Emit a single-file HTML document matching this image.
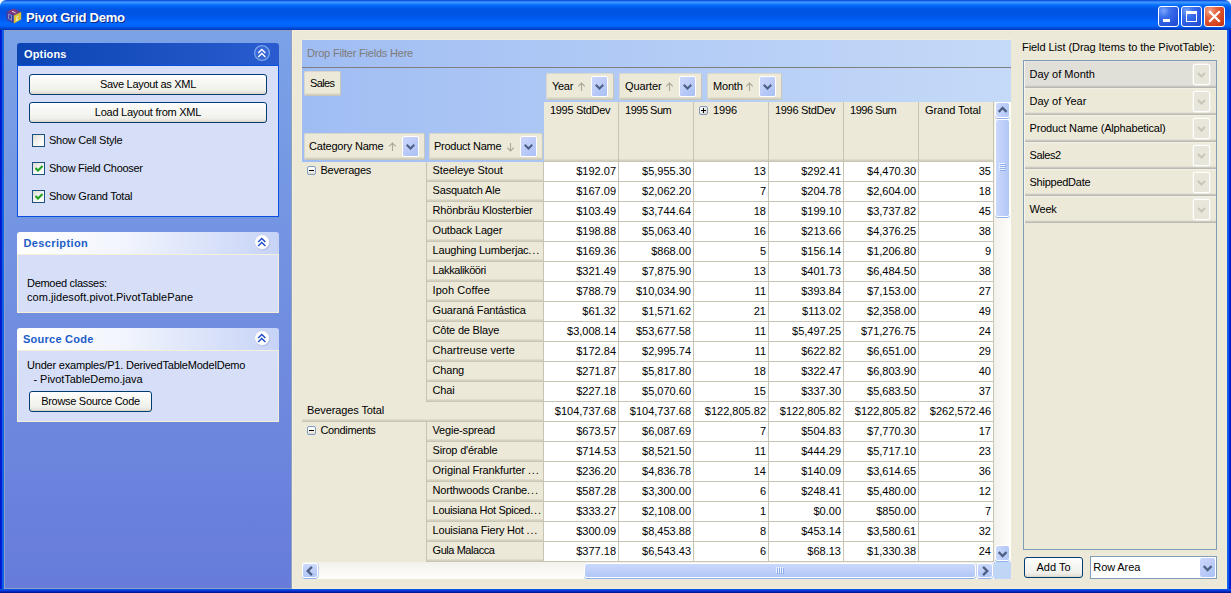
<!DOCTYPE html>
<html><head><meta charset='utf-8'><title>Pivot Grid Demo</title><style>
*{box-sizing:border-box;margin:0;padding:0}
html,body{width:1231px;height:593px;overflow:hidden;background:#fff}
body{font-family:"Liberation Sans",sans-serif;font-size:11px;color:#000;position:relative}
div,span,svg{position:absolute}
.t{white-space:pre;line-height:13px;height:13px}
#title{left:0;top:0;width:1231px;height:30px;border-radius:6px 6px 0 0;
 background:linear-gradient(to bottom,#0a3fd0 0,#1d6cf0 1px,#3d97ff 2px,#3a94ff 3px,#167cff 4px,#0670ff 5px,#0260ec 7px,#0055e3 9px,#0054e3 13px,#0057ea 17px,#005ef5 20px,#0368ff 23px,#0265fa 26px,#005ae8 27px,#004cd8 28px,#0040c8 29px,#0038b8 30px)}
#bl{left:0;top:30px;width:4px;height:563px;background:linear-gradient(to right,#0019cf 0,#0019cf 1.4px,#0d50e6 2px,#1268f0 3px,#0a5ae4 4px)}
#br{left:1227px;top:30px;width:4px;height:563px;background:linear-gradient(to left,#0019cf 0,#0019cf 1.4px,#0d50e6 2px,#1268f0 3px,#0a5ae4 4px)}
#bb{left:0;top:589px;width:1231px;height:4px;background:linear-gradient(to top,#00138c 0,#001ea0 25%,#0831d9 50%,#0a5be8 100%)}
#lp{left:4px;top:30px;width:288px;height:559px;background:linear-gradient(to bottom,#7ba2e7,#677cda);border:1px solid #8ba0c4;border-top-color:#8ba0c4}
#rp{left:292px;top:30px;width:935px;height:559px;background:#ece9d8;border:1px solid #f6efd8}
.ph{left:17px;width:262px;height:23px;border-radius:3px 3px 0 0}
.pht{left:6px;top:5px;font-weight:bold;font-size:11px}
.pb{left:17px;width:262px;background:#d6dff7;border:1px solid #f5eed8}
.xb{height:21px;border:1px solid #003c74;border-radius:3px;background:linear-gradient(to bottom,#fff 0,#f8f8f5 30%,#f1f1ec 78%,#e6e3da 92%,#d8d2c4 100%);text-align:center;line-height:19px;white-space:pre}
.cb{width:13px;height:13px;border:1px solid #1c5180;background:linear-gradient(135deg,#dcdcd7 0%,#f3f3ef 50%,#fff 100%)}
.fb{height:27px;border-radius:2px;border-top:1px solid #d9d7cb;border-left:1px solid #d9d7cb;border-right:1px solid #c9c6b8;background:linear-gradient(to bottom,#ece9d8 0,#ece9d8 calc(100% - 3px),#e2dece calc(100% - 3px),#e2dece calc(100% - 2px),#d6d2c2 calc(100% - 2px),#d6d2c2 calc(100% - 1px),#cbc7b8 calc(100% - 1px),#cbc7b8 100%)}
.dd{width:17px;height:21px;border:1px solid #fff;background:linear-gradient(135deg,#cbd7fc 0%,#c2cffa 35%,#b6c8f7 65%,#a9c1f5 100%);border-radius:2px}
.hc{background:linear-gradient(to bottom,#ece9d8 0,#ece9d8 calc(100% - 3px),#e0dccb calc(100% - 3px),#e0dccb calc(100% - 2px),#d5d1c0 calc(100% - 2px),#d5d1c0 calc(100% - 1px),#cac6b6 calc(100% - 1px),#cac6b6 100%);border-right:1px solid #c7c4b3}
.dc{background:#fff;border-right:1px solid #c8c5b5;border-bottom:1px solid #c8c5b5;text-align:right;padding-right:2px;line-height:19px;white-space:pre;height:20px}
.li{left:0px;width:192px;height:27px;background:linear-gradient(to bottom,#f4f2e8 0,#ece9d8 2px,#ece9d8 24px,#d9d7cc 25px,#bfbdb6 26px,#b8b6b0 27px);border-left:1px solid #f6f4ec}
.ldd{left:168px;top:3px;width:17px;height:21px;border:1px solid #fff;background:#e8e6da;border-radius:2px;box-shadow:0 0 0 0.5px #f6f5ee}
</style></head><body>
<div id='title'></div><div id='bl'></div><div id='br'></div><div id='bb'></div><svg style='left:6px;top:8px' width='16' height='16' viewBox='0 0 16 16'>
<polygon points='7.8,0.6 15.2,4 7.8,7.6 0.3,4' fill='#7f3a7c'/>
<polygon points='0.3,4 7.8,7.6 7.8,15.4 0.3,11.6' fill='#3a3ea4'/>
<polygon points='15.2,4 7.8,7.6 7.8,15.4 15.2,11.6' fill='#d9c12f'/>
<rect x='2.6' y='7' width='2.8' height='4.5' fill='none' stroke='#9a98cc' stroke-width='0.9' transform='skewY(27) translate(0,-2.2)'/>
<path d='M10.3 9.2 L12.6 8 M10.3 11 L12.3 10 M10.3 12.8 L12.6 11.6 M10.3 9 V13' stroke='#efe9c0' stroke-width='0.9' fill='none'/>
<path d='M6 3.2 L9.5 4.8' stroke='#e8d8e8' stroke-width='1'/>
</svg><span class='t' style='left:26px;top:10px;font-size:13px;font-weight:bold;color:#fff;line-height:16px;height:16px;letter-spacing:-0.2px;text-shadow:1px 1px 0 #0a2a8a'>Pivot Grid Demo</span><div style='left:1158px;top:6px;width:21px;height:21px;border:1px solid #fff;border-radius:3px;background:radial-gradient(circle at 25% 20%,#7aa5fa 0%,#3c70ec 30%,#2a5ae0 65%,#1c48c8 100%)'><div style='left:4px;top:12px;width:7px;height:3px;background:#fff'></div></div><div style='left:1181px;top:6px;width:21px;height:21px;border:1px solid #fff;border-radius:3px;background:radial-gradient(circle at 25% 20%,#7aa5fa 0%,#3c70ec 30%,#2a5ae0 65%,#1c48c8 100%)'><div style='left:4px;top:4px;width:11px;height:11px;border:1px solid #fff;border-top-width:3px'></div></div><div style='left:1204px;top:6px;width:21px;height:21px;border:1px solid #fff;border-radius:3px;background:radial-gradient(circle at 25% 20%,#f0a58c 0%,#e4603a 35%,#d2401c 75%,#b83010 100%)'><svg style='left:0;top:0' width='19' height='19' viewBox='0 0 19 19'><path d='M5 5 L14 14 M14 5 L5 14' stroke='#fff' stroke-width='2.2' stroke-linecap='square'/></svg></div><div id='lp'></div><div class='ph' style='top:43px;background:linear-gradient(to right,#0a45b3 0%,#1a50c0 50%,#2a5cd0 100%)'><span class='t pht' style='color:#fff;left:7px;letter-spacing:0.15px'>Options</span><svg style='left:237px;top:2px;overflow:visible' width='16' height='16' viewBox='0 0 16 16'><circle cx='8' cy='8' r='7.4' fill='#3866d4' stroke='#78a5ee' stroke-width='1.3'/><path d='M4.2 8 L7.8 4.5 L11.4 8 M4.2 12 L7.8 8.5 L11.4 12' fill='none' stroke='#fff' stroke-width='1.4'/></svg></div><div class='pb' style='top:65px;height:152px;border:1px solid #0a50e0'></div><div class='xb' style='left:29px;top:74px;width:238px;letter-spacing:-0.3px'>Save Layout as XML</div><div class='xb' style='left:29px;top:102px;width:238px;letter-spacing:-0.25px'>Load Layout from XML</div><div class='cb' style='left:32px;top:134px'></div><span class='t' style='left:49px;top:134px;letter-spacing:-0.25px;'>Show Cell Style</span><div class='cb' style='left:32px;top:162px'><svg style='left:2px;top:2px' width='8' height='8' viewBox='0 0 8 8'><path d='M0.5 3 L3 5.5 L7.5 1 ' stroke='#21a121' stroke-width='2' fill='none'/></svg></div><span class='t' style='left:49px;top:162px;letter-spacing:-0.3px;'>Show Field Chooser</span><div class='cb' style='left:32px;top:190px'><svg style='left:2px;top:2px' width='8' height='8' viewBox='0 0 8 8'><path d='M0.5 3 L3 5.5 L7.5 1 ' stroke='#21a121' stroke-width='2' fill='none'/></svg></div><span class='t' style='left:49px;top:190px;letter-spacing:-0.25px;'>Show Grand Total</span><div class='ph' style='top:232px;background:linear-gradient(to right,#ffffff 0%,#f2f5fd 40%,#c6d3f7 100%)'><span class='t pht' style='color:#215dc6;left:6.5px;letter-spacing:0.37px'>Description</span><svg style='left:237px;top:2px;overflow:visible' width='16' height='16' viewBox='0 0 16 16'><circle cx='8.7' cy='8.9' r='7.6' fill='#a9b4dc' opacity='0.7'/><circle cx='8' cy='8' r='7.4' fill='#fff' stroke='#c4cfee' stroke-width='0.8'/><path d='M4.2 8 L7.8 4.5 L11.4 8 M4.2 12 L7.8 8.5 L11.4 12' fill='none' stroke='#1c4bc8' stroke-width='1.4'/></svg></div><div class='pb' style='top:254px;height:59px'></div><span class='t' style='left:27px;top:277px;letter-spacing:-0.3px;'>Demoed classes:</span><span class='t' style='left:27px;top:291px;letter-spacing:0.05px;'>com.jidesoft.pivot.PivotTablePane</span><div class='ph' style='top:328px;background:linear-gradient(to right,#ffffff 0%,#f2f5fd 40%,#c6d3f7 100%)'><span class='t pht' style='color:#215dc6;letter-spacing:0.25px'>Source Code</span><svg style='left:237px;top:2px;overflow:visible' width='16' height='16' viewBox='0 0 16 16'><circle cx='8.7' cy='8.9' r='7.6' fill='#a9b4dc' opacity='0.7'/><circle cx='8' cy='8' r='7.4' fill='#fff' stroke='#c4cfee' stroke-width='0.8'/><path d='M4.2 8 L7.8 4.5 L11.4 8 M4.2 12 L7.8 8.5 L11.4 12' fill='none' stroke='#1c4bc8' stroke-width='1.4'/></svg></div><div class='pb' style='top:350px;height:72px'></div><span class='t' style='left:27px;top:359px;letter-spacing:-0.2px;'>Under examples/P1. DerivedTableModelDemo</span><span class='t' style='left:33.5px;top:373px;letter-spacing:-0.05px;'>- PivotTableDemo.java</span><div class='xb' style='left:29px;top:391px;width:123px;letter-spacing:-0.3px'>Browse Source Code</div><div id='rp'></div><div style='left:301px;top:39px;width:711px;height:1px;background:#f3edda'></div><div style='left:301px;top:39px;width:1px;height:123px;background:#f1ecdb'></div><div style='left:302px;top:40px;width:709px;height:122px;background:linear-gradient(to right,#a0bdf3,#c5daf8)'></div><div style='left:302px;top:67px;width:709px;height:1px;background:#7f7f7f'></div><span class='t' style='left:307px;top:47px;letter-spacing:-0.2px;color:#7f7c78;'>Drop Filter Fields Here</span><div class='fb' style='left:304px;top:71px;width:37px;height:25px'><span class='t' style='left:5px;top:5px;letter-spacing:-0.6px'>Sales</span></div><div class='fb' style='left:546px;top:73px;width:68px;height:27px'><span class='t' style='left:5px;top:6px;letter-spacing:-0.3px'>Year</span><svg style='left:30px;top:8px' width='9' height='10' viewBox='0 0 9 10'><path d='M4.5 1 V9 M1.2 4.3 L4.5 1 L7.8 4.3' fill='none' stroke='#aaa799' stroke-width='1.1'/></svg><div class='dd' style='left:44px;top:2px'><svg style='left:3px;top:7px' width='9' height='6' viewBox='0 0 9 6'><path d='M0.7 0.8 L4.5 4.6 L8.3 0.8' fill='none' stroke='#4d6185' stroke-width='2.1'/></svg></div></div><div class='fb' style='left:619px;top:73px;width:83px;height:27px'><span class='t' style='left:5px;top:6px;letter-spacing:-0.1px'>Quarter</span><svg style='left:45px;top:8px' width='9' height='10' viewBox='0 0 9 10'><path d='M4.5 1 V9 M1.2 4.3 L4.5 1 L7.8 4.3' fill='none' stroke='#aaa799' stroke-width='1.1'/></svg><div class='dd' style='left:59px;top:2px'><svg style='left:3px;top:7px' width='9' height='6' viewBox='0 0 9 6'><path d='M0.7 0.8 L4.5 4.6 L8.3 0.8' fill='none' stroke='#4d6185' stroke-width='2.1'/></svg></div></div><div class='fb' style='left:707px;top:73px;width:75px;height:27px'><span class='t' style='left:5px;top:6px;letter-spacing:-0.2px'>Month</span><svg style='left:37px;top:8px' width='9' height='10' viewBox='0 0 9 10'><path d='M4.5 1 V9 M1.2 4.3 L4.5 1 L7.8 4.3' fill='none' stroke='#aaa799' stroke-width='1.1'/></svg><div class='dd' style='left:51px;top:2px'><svg style='left:3px;top:7px' width='9' height='6' viewBox='0 0 9 6'><path d='M0.7 0.8 L4.5 4.6 L8.3 0.8' fill='none' stroke='#4d6185' stroke-width='2.1'/></svg></div></div><div class='fb' style='left:304px;top:133px;width:121px;height:27px'><span class='t' style='left:4px;top:6px;letter-spacing:-0.2px'>Category Name</span><svg style='left:83px;top:8px' width='9' height='10' viewBox='0 0 9 10'><path d='M4.5 1 V9 M1.2 4.3 L4.5 1 L7.8 4.3' fill='none' stroke='#aaa799' stroke-width='1.1'/></svg><div class='dd' style='left:97px;top:2px'><svg style='left:3px;top:7px' width='9' height='6' viewBox='0 0 9 6'><path d='M0.7 0.8 L4.5 4.6 L8.3 0.8' fill='none' stroke='#4d6185' stroke-width='2.1'/></svg></div></div><div class='fb' style='left:429px;top:133px;width:114px;height:27px'><span class='t' style='left:4px;top:6px;letter-spacing:-0.25px'>Product Name</span><svg style='left:76px;top:8px' width='9' height='10' viewBox='0 0 9 10'><path d='M4.5 1 V9 M1.2 5.7 L4.5 9 L7.8 5.7' fill='none' stroke='#aaa799' stroke-width='1.1'/></svg><div class='dd' style='left:90px;top:2px'><svg style='left:3px;top:7px' width='9' height='6' viewBox='0 0 9 6'><path d='M0.7 0.8 L4.5 4.6 L8.3 0.8' fill='none' stroke='#4d6185' stroke-width='2.1'/></svg></div></div><div class='hc' style='left:544px;top:102px;width:75px;height:60px'></div><span class='t' style='left:550px;top:104px;letter-spacing:-0.31px;'>1995 StdDev</span><div class='hc' style='left:619px;top:102px;width:75px;height:60px'></div><span class='t' style='left:625px;top:104px;letter-spacing:-0.49px;'>1995 Sum</span><div class='hc' style='left:694px;top:102px;width:75px;height:60px'></div><div style='left:699px;top:106px;width:9px;height:9px;border:1px solid #8099bd;border-radius:2px;background:linear-gradient(135deg,#fff,#d8d4c8)'><div style='left:1px;top:3px;width:5px;height:1px;background:#000'></div><div style='left:3px;top:1px;width:1px;height:5px;background:#000'></div></div><span class='t' style='left:713px;top:104px;letter-spacing:-0.12px;'>1996</span><div class='hc' style='left:769px;top:102px;width:75px;height:60px'></div><span class='t' style='left:775px;top:104px;letter-spacing:-0.31px;'>1996 StdDev</span><div class='hc' style='left:844px;top:102px;width:75px;height:60px'></div><span class='t' style='left:850px;top:104px;letter-spacing:-0.49px;'>1996 Sum</span><div class='hc' style='left:919px;top:102px;width:75px;height:60px'></div><span class='t' style='left:925px;top:104px;letter-spacing:-0.07px;'>Grand Total</span><div class='hc' style='left:302px;top:162px;width:125px;height:240px;background:#ece9d8'></div><div class='hc' style='left:302px;top:422px;width:125px;height:141px;background:#ece9d8'></div><div style='left:307px;top:166px;width:9px;height:9px;border:1px solid #7f9cc4;border-radius:2px;background:linear-gradient(to bottom,#fff 20%,#e4dccc)'><div style='left:1px;top:3px;width:5px;height:1px;background:#000'></div></div><span class='t' style='left:320.5px;top:164px;letter-spacing:-0.22px;'>Beverages</span><div style='left:307px;top:426px;width:9px;height:9px;border:1px solid #7f9cc4;border-radius:2px;background:linear-gradient(to bottom,#fff 20%,#e4dccc)'><div style='left:1px;top:3px;width:5px;height:1px;background:#000'></div></div><span class='t' style='left:320.5px;top:424px;letter-spacing:-0.37px;'>Condiments</span><div class='hc' style='left:427px;top:162px;width:117px;height:20px'></div><span class='t' style='left:432.6px;top:164px;letter-spacing:-0.1px;'>Steeleye Stout</span><div class='dc' style='left:544px;top:162px;width:75px'>$192.07</div><div class='dc' style='left:619px;top:162px;width:75px'>$5,955.30</div><div class='dc' style='left:694px;top:162px;width:75px'>13</div><div class='dc' style='left:769px;top:162px;width:75px'>$292.41</div><div class='dc' style='left:844px;top:162px;width:75px'>$4,470.30</div><div class='dc' style='left:919px;top:162px;width:75px'>35</div><div class='hc' style='left:427px;top:182px;width:117px;height:20px'></div><span class='t' style='left:432.6px;top:184px;letter-spacing:-0.2px;'>Sasquatch Ale</span><div class='dc' style='left:544px;top:182px;width:75px'>$167.09</div><div class='dc' style='left:619px;top:182px;width:75px'>$2,062.20</div><div class='dc' style='left:694px;top:182px;width:75px'>7</div><div class='dc' style='left:769px;top:182px;width:75px'>$204.78</div><div class='dc' style='left:844px;top:182px;width:75px'>$2,604.00</div><div class='dc' style='left:919px;top:182px;width:75px'>18</div><div class='hc' style='left:427px;top:202px;width:117px;height:20px'></div><span class='t' style='left:432.6px;top:204px;letter-spacing:-0.2px;'>Rhönbräu Klosterbier</span><div class='dc' style='left:544px;top:202px;width:75px'>$103.49</div><div class='dc' style='left:619px;top:202px;width:75px'>$3,744.64</div><div class='dc' style='left:694px;top:202px;width:75px'>18</div><div class='dc' style='left:769px;top:202px;width:75px'>$199.10</div><div class='dc' style='left:844px;top:202px;width:75px'>$3,737.82</div><div class='dc' style='left:919px;top:202px;width:75px'>45</div><div class='hc' style='left:427px;top:222px;width:117px;height:20px'></div><span class='t' style='left:432.6px;top:224px;letter-spacing:-0.2px;'>Outback Lager</span><div class='dc' style='left:544px;top:222px;width:75px'>$198.88</div><div class='dc' style='left:619px;top:222px;width:75px'>$5,063.40</div><div class='dc' style='left:694px;top:222px;width:75px'>16</div><div class='dc' style='left:769px;top:222px;width:75px'>$213.66</div><div class='dc' style='left:844px;top:222px;width:75px'>$4,376.25</div><div class='dc' style='left:919px;top:222px;width:75px'>38</div><div class='hc' style='left:427px;top:242px;width:117px;height:20px'></div><span class='t' style='left:432.6px;top:244px;letter-spacing:-0.22px;'>Laughing Lumberjac<span style='position:static;letter-spacing:0.9px'>...</span></span><div class='dc' style='left:544px;top:242px;width:75px'>$169.36</div><div class='dc' style='left:619px;top:242px;width:75px'>$868.00</div><div class='dc' style='left:694px;top:242px;width:75px'>5</div><div class='dc' style='left:769px;top:242px;width:75px'>$156.14</div><div class='dc' style='left:844px;top:242px;width:75px'>$1,206.80</div><div class='dc' style='left:919px;top:242px;width:75px'>9</div><div class='hc' style='left:427px;top:262px;width:117px;height:20px'></div><span class='t' style='left:432.6px;top:264px;letter-spacing:-0.4px;'>Lakkalikööri</span><div class='dc' style='left:544px;top:262px;width:75px'>$321.49</div><div class='dc' style='left:619px;top:262px;width:75px'>$7,875.90</div><div class='dc' style='left:694px;top:262px;width:75px'>13</div><div class='dc' style='left:769px;top:262px;width:75px'>$401.73</div><div class='dc' style='left:844px;top:262px;width:75px'>$6,484.50</div><div class='dc' style='left:919px;top:262px;width:75px'>38</div><div class='hc' style='left:427px;top:282px;width:117px;height:20px'></div><span class='t' style='left:432.6px;top:284px;letter-spacing:0.05px;'>Ipoh Coffee</span><div class='dc' style='left:544px;top:282px;width:75px'>$788.79</div><div class='dc' style='left:619px;top:282px;width:75px'>$10,034.90</div><div class='dc' style='left:694px;top:282px;width:75px'>11</div><div class='dc' style='left:769px;top:282px;width:75px'>$393.84</div><div class='dc' style='left:844px;top:282px;width:75px'>$7,153.00</div><div class='dc' style='left:919px;top:282px;width:75px'>27</div><div class='hc' style='left:427px;top:302px;width:117px;height:20px'></div><span class='t' style='left:432.6px;top:304px;letter-spacing:-0.2px;'>Guaraná Fantástica</span><div class='dc' style='left:544px;top:302px;width:75px'>$61.32</div><div class='dc' style='left:619px;top:302px;width:75px'>$1,571.62</div><div class='dc' style='left:694px;top:302px;width:75px'>21</div><div class='dc' style='left:769px;top:302px;width:75px'>$113.02</div><div class='dc' style='left:844px;top:302px;width:75px'>$2,358.00</div><div class='dc' style='left:919px;top:302px;width:75px'>49</div><div class='hc' style='left:427px;top:322px;width:117px;height:20px'></div><span class='t' style='left:432.6px;top:324px;letter-spacing:-0.2px;'>Côte de Blaye</span><div class='dc' style='left:544px;top:322px;width:75px'>$3,008.14</div><div class='dc' style='left:619px;top:322px;width:75px'>$53,677.58</div><div class='dc' style='left:694px;top:322px;width:75px'>11</div><div class='dc' style='left:769px;top:322px;width:75px'>$5,497.25</div><div class='dc' style='left:844px;top:322px;width:75px'>$71,276.75</div><div class='dc' style='left:919px;top:322px;width:75px'>24</div><div class='hc' style='left:427px;top:342px;width:117px;height:20px'></div><span class='t' style='left:432.6px;top:344px;letter-spacing:0.03px;'>Chartreuse verte</span><div class='dc' style='left:544px;top:342px;width:75px'>$172.84</div><div class='dc' style='left:619px;top:342px;width:75px'>$2,995.74</div><div class='dc' style='left:694px;top:342px;width:75px'>11</div><div class='dc' style='left:769px;top:342px;width:75px'>$622.82</div><div class='dc' style='left:844px;top:342px;width:75px'>$6,651.00</div><div class='dc' style='left:919px;top:342px;width:75px'>29</div><div class='hc' style='left:427px;top:362px;width:117px;height:20px'></div><span class='t' style='left:432.6px;top:364px;letter-spacing:-0.2px;'>Chang</span><div class='dc' style='left:544px;top:362px;width:75px'>$271.87</div><div class='dc' style='left:619px;top:362px;width:75px'>$5,817.80</div><div class='dc' style='left:694px;top:362px;width:75px'>18</div><div class='dc' style='left:769px;top:362px;width:75px'>$322.47</div><div class='dc' style='left:844px;top:362px;width:75px'>$6,803.90</div><div class='dc' style='left:919px;top:362px;width:75px'>40</div><div class='hc' style='left:427px;top:382px;width:117px;height:20px'></div><span class='t' style='left:432.6px;top:384px;letter-spacing:-0.2px;'>Chai</span><div class='dc' style='left:544px;top:382px;width:75px'>$227.18</div><div class='dc' style='left:619px;top:382px;width:75px'>$5,070.60</div><div class='dc' style='left:694px;top:382px;width:75px'>15</div><div class='dc' style='left:769px;top:382px;width:75px'>$337.30</div><div class='dc' style='left:844px;top:382px;width:75px'>$5,683.50</div><div class='dc' style='left:919px;top:382px;width:75px'>37</div><div class='hc' style='left:302px;top:402px;width:242px;height:20px'></div><span class='t' style='left:307px;top:404px;letter-spacing:-0.1px;'>Beverages Total</span><div class='dc' style='left:544px;top:402px;width:75px'>$104,737.68</div><div class='dc' style='left:619px;top:402px;width:75px'>$104,737.68</div><div class='dc' style='left:694px;top:402px;width:75px'>$122,805.82</div><div class='dc' style='left:769px;top:402px;width:75px'>$122,805.82</div><div class='dc' style='left:844px;top:402px;width:75px'>$122,805.82</div><div class='dc' style='left:919px;top:402px;width:75px'>$262,572.46</div><div class='hc' style='left:427px;top:422px;width:117px;height:20px'></div><span class='t' style='left:432.6px;top:424px;letter-spacing:-0.2px;'>Vegie-spread</span><div class='dc' style='left:544px;top:422px;width:75px'>$673.57</div><div class='dc' style='left:619px;top:422px;width:75px'>$6,087.69</div><div class='dc' style='left:694px;top:422px;width:75px'>7</div><div class='dc' style='left:769px;top:422px;width:75px'>$504.83</div><div class='dc' style='left:844px;top:422px;width:75px'>$7,770.30</div><div class='dc' style='left:919px;top:422px;width:75px'>17</div><div class='hc' style='left:427px;top:442px;width:117px;height:20px'></div><span class='t' style='left:432.6px;top:444px;letter-spacing:-0.2px;'>Sirop d&#x27;érable</span><div class='dc' style='left:544px;top:442px;width:75px'>$714.53</div><div class='dc' style='left:619px;top:442px;width:75px'>$8,521.50</div><div class='dc' style='left:694px;top:442px;width:75px'>11</div><div class='dc' style='left:769px;top:442px;width:75px'>$444.29</div><div class='dc' style='left:844px;top:442px;width:75px'>$5,717.10</div><div class='dc' style='left:919px;top:442px;width:75px'>23</div><div class='hc' style='left:427px;top:462px;width:117px;height:20px'></div><span class='t' style='left:432.6px;top:464px;letter-spacing:-0.12px;'>Original Frankfurter <span style='position:static;letter-spacing:0.9px'>...</span></span><div class='dc' style='left:544px;top:462px;width:75px'>$236.20</div><div class='dc' style='left:619px;top:462px;width:75px'>$4,836.78</div><div class='dc' style='left:694px;top:462px;width:75px'>14</div><div class='dc' style='left:769px;top:462px;width:75px'>$140.09</div><div class='dc' style='left:844px;top:462px;width:75px'>$3,614.65</div><div class='dc' style='left:919px;top:462px;width:75px'>36</div><div class='hc' style='left:427px;top:482px;width:117px;height:20px'></div><span class='t' style='left:432.6px;top:484px;letter-spacing:-0.2px;'>Northwoods Cranbe<span style='position:static;letter-spacing:0.9px'>...</span></span><div class='dc' style='left:544px;top:482px;width:75px'>$587.28</div><div class='dc' style='left:619px;top:482px;width:75px'>$3,300.00</div><div class='dc' style='left:694px;top:482px;width:75px'>6</div><div class='dc' style='left:769px;top:482px;width:75px'>$248.41</div><div class='dc' style='left:844px;top:482px;width:75px'>$5,480.00</div><div class='dc' style='left:919px;top:482px;width:75px'>12</div><div class='hc' style='left:427px;top:502px;width:117px;height:20px'></div><span class='t' style='left:432.6px;top:504px;letter-spacing:-0.32px;'>Louisiana Hot Spiced<span style='position:static;letter-spacing:0.9px'>...</span></span><div class='dc' style='left:544px;top:502px;width:75px'>$333.27</div><div class='dc' style='left:619px;top:502px;width:75px'>$2,108.00</div><div class='dc' style='left:694px;top:502px;width:75px'>1</div><div class='dc' style='left:769px;top:502px;width:75px'>$0.00</div><div class='dc' style='left:844px;top:502px;width:75px'>$850.00</div><div class='dc' style='left:919px;top:502px;width:75px'>7</div><div class='hc' style='left:427px;top:522px;width:117px;height:20px'></div><span class='t' style='left:432.6px;top:524px;letter-spacing:-0.2px;'>Louisiana Fiery Hot <span style='position:static;letter-spacing:0.9px'>...</span></span><div class='dc' style='left:544px;top:522px;width:75px'>$300.09</div><div class='dc' style='left:619px;top:522px;width:75px'>$8,453.88</div><div class='dc' style='left:694px;top:522px;width:75px'>8</div><div class='dc' style='left:769px;top:522px;width:75px'>$453.14</div><div class='dc' style='left:844px;top:522px;width:75px'>$3,580.61</div><div class='dc' style='left:919px;top:522px;width:75px'>32</div><div class='hc' style='left:427px;top:542px;width:117px;height:20px'></div><span class='t' style='left:432.6px;top:544px;letter-spacing:-0.45px;'>Gula Malacca</span><div class='dc' style='left:544px;top:542px;width:75px'>$377.18</div><div class='dc' style='left:619px;top:542px;width:75px'>$6,543.43</div><div class='dc' style='left:694px;top:542px;width:75px'>6</div><div class='dc' style='left:769px;top:542px;width:75px'>$68.13</div><div class='dc' style='left:844px;top:542px;width:75px'>$1,330.38</div><div class='dc' style='left:919px;top:542px;width:75px'>24</div><div style='left:994px;top:102px;width:17px;height:460px;background:linear-gradient(to right,#f3f1ec,#fefefb)'></div><div style='left:995px;top:102px;width:15px;height:16px;border:1px solid #fff;border-radius:3px;background:linear-gradient(to right,#cad8fc 0%,#c0d0fa 45%,#b1c7f7 100%);box-shadow:0 1px 0 #8fb0ea'><svg style='left:2px;top:3px' width='10' height='7' viewBox='0 0 10 7'><path d='M0.7 5.9 L4.6 2 L8.5 5.9' fill='none' stroke='#4d6185' stroke-width='2.4'/></svg></div><div style='left:995px;top:119px;width:15px;height:98px;border:1px solid #fff;border-radius:3px;background:linear-gradient(to right,#cad8fc 0%,#c0d0fa 45%,#b1c7f7 100%);box-shadow:0 1px 0 #8fb0ea'><div style='left:3px;top:43px;width:6px;height:1px;background:#eef4ff;box-shadow:0 2px 0 #eef4ff,0 4px 0 #eef4ff,0 6px 0 #eef4ff,1px 1px 0 #8cacec,1px 3px 0 #8cacec,1px 5px 0 #8cacec,1px 7px 0 #8cacec'></div></div><div style='left:995px;top:545px;width:15px;height:16px;border:1px solid #fff;border-radius:3px;background:linear-gradient(to right,#cad8fc 0%,#c0d0fa 45%,#b1c7f7 100%);box-shadow:0 1px 0 #8fb0ea'><svg style='left:2px;top:4.5px' width='10' height='7' viewBox='0 0 10 7'><path d='M0.7 1.1 L4.6 5 L8.5 1.1' fill='none' stroke='#4d6185' stroke-width='2.4'/></svg></div><div style='left:302px;top:562px;width:692px;height:17px;background:linear-gradient(to bottom,#f3f1ec,#fefefb)'></div><div style='left:994px;top:562px;width:17px;height:17px;background:#c0d6f7'></div><div style='left:302px;top:563px;width:16px;height:15px;border:1px solid #fff;border-radius:3px;background:linear-gradient(to bottom,#cad8fc 0%,#c0d0fa 45%,#b1c7f7 100%);box-shadow:0 1px 0 #8fb0ea,1px 0 0 #c4d3f0'><svg style='left:3px;top:2px' width='7' height='10' viewBox='0 0 7 10'><path d='M5.9 0.9 L1.8 5 L5.9 9.1' fill='none' stroke='#4d6185' stroke-width='2.4'/></svg></div><div style='left:584px;top:563px;width:392px;height:15px;border:1px solid #fff;border-radius:3px;background:linear-gradient(to bottom,#cad8fc 0%,#c0d0fa 45%,#b1c7f7 100%);box-shadow:0 1px 0 #8fb0ea,1px 0 0 #c4d3f0'><div style='left:191px;top:3px;width:1px;height:6px;background:#eef4ff;box-shadow:2px 0 0 #eef4ff,4px 0 0 #eef4ff,6px 0 0 #eef4ff,1px 1px 0 #8cacec,3px 1px 0 #8cacec,5px 1px 0 #8cacec,7px 1px 0 #8cacec'></div></div><div style='left:977px;top:563px;width:16px;height:15px;border:1px solid #fff;border-radius:3px;background:linear-gradient(to bottom,#cad8fc 0%,#c0d0fa 45%,#b1c7f7 100%);box-shadow:0 1px 0 #8fb0ea,1px 0 0 #c4d3f0'><svg style='left:4px;top:2px' width='7' height='10' viewBox='0 0 7 10'><path d='M1.1 0.9 L5.2 5 L1.1 9.1' fill='none' stroke='#4d6185' stroke-width='2.4'/></svg></div><span class='t' style='left:1022px;top:41px;letter-spacing:-0.06px;'>Field List (Drag Items to the PivotTable):</span><div style='left:1023px;top:60px;width:194px;height:490px;border:1px solid #7f9db9;background:#ece9d8'><div class='li' style='top:0px;background:linear-gradient(to bottom,#e8e7de 0,#e0dfd8 2px,#e0dfd8 24px,#d2d1ca 25px,#bdbcb6 26px,#b6b5b0 27px);'><span class='t' style='left:4.5px;top:7px;letter-spacing:0px'>Day of Month</span><div class='ldd'><svg style='left:3px;top:7px' width='9' height='6' viewBox='0 0 9 6'><path d='M1 1 L4.5 4.5 L8 1' fill='none' stroke='#c8c6b8' stroke-width='2'/></svg></div></div><div class='li' style='top:27px;'><span class='t' style='left:4.5px;top:7px;letter-spacing:0px'>Day of Year</span><div class='ldd'><svg style='left:3px;top:7px' width='9' height='6' viewBox='0 0 9 6'><path d='M1 1 L4.5 4.5 L8 1' fill='none' stroke='#c8c6b8' stroke-width='2'/></svg></div></div><div class='li' style='top:54px;'><span class='t' style='left:4.5px;top:7px;letter-spacing:-0.17px'>Product Name (Alphabetical)</span><div class='ldd'><svg style='left:3px;top:7px' width='9' height='6' viewBox='0 0 9 6'><path d='M1 1 L4.5 4.5 L8 1' fill='none' stroke='#c8c6b8' stroke-width='2'/></svg></div></div><div class='li' style='top:81px;'><span class='t' style='left:4.5px;top:7px;letter-spacing:-0.4px'>Sales2</span><div class='ldd'><svg style='left:3px;top:7px' width='9' height='6' viewBox='0 0 9 6'><path d='M1 1 L4.5 4.5 L8 1' fill='none' stroke='#c8c6b8' stroke-width='2'/></svg></div></div><div class='li' style='top:108px;'><span class='t' style='left:4.5px;top:7px;letter-spacing:-0.25px'>ShippedDate</span><div class='ldd'><svg style='left:3px;top:7px' width='9' height='6' viewBox='0 0 9 6'><path d='M1 1 L4.5 4.5 L8 1' fill='none' stroke='#c8c6b8' stroke-width='2'/></svg></div></div><div class='li' style='top:135px;'><span class='t' style='left:4.5px;top:7px;letter-spacing:-0.2px'>Week</span><div class='ldd'><svg style='left:3px;top:7px' width='9' height='6' viewBox='0 0 9 6'><path d='M1 1 L4.5 4.5 L8 1' fill='none' stroke='#c8c6b8' stroke-width='2'/></svg></div></div></div><div class='xb' style='left:1024px;top:557px;width:59px'>Add To</div><div style='left:1090px;top:556px;width:127px;height:23px;border:1px solid #7f9db9;background:#fff'><span class='t' style='left:2.3px;top:4px;letter-spacing:-0.1px'>Row Area</span><div style='left:109px;top:1px;width:15px;height:19px;border-radius:2px;background:linear-gradient(135deg,#cbd7fc 0%,#c2cffa 35%,#b6c8f7 65%,#a9c1f5 100%)'><svg style='left:3px;top:6.5px' width='10' height='7' viewBox='0 0 10 7'><path d='M0.7 1.1 L4.6 5 L8.5 1.1' fill='none' stroke='#4d6185' stroke-width='2.3'/></svg></div></div>
</body></html>
